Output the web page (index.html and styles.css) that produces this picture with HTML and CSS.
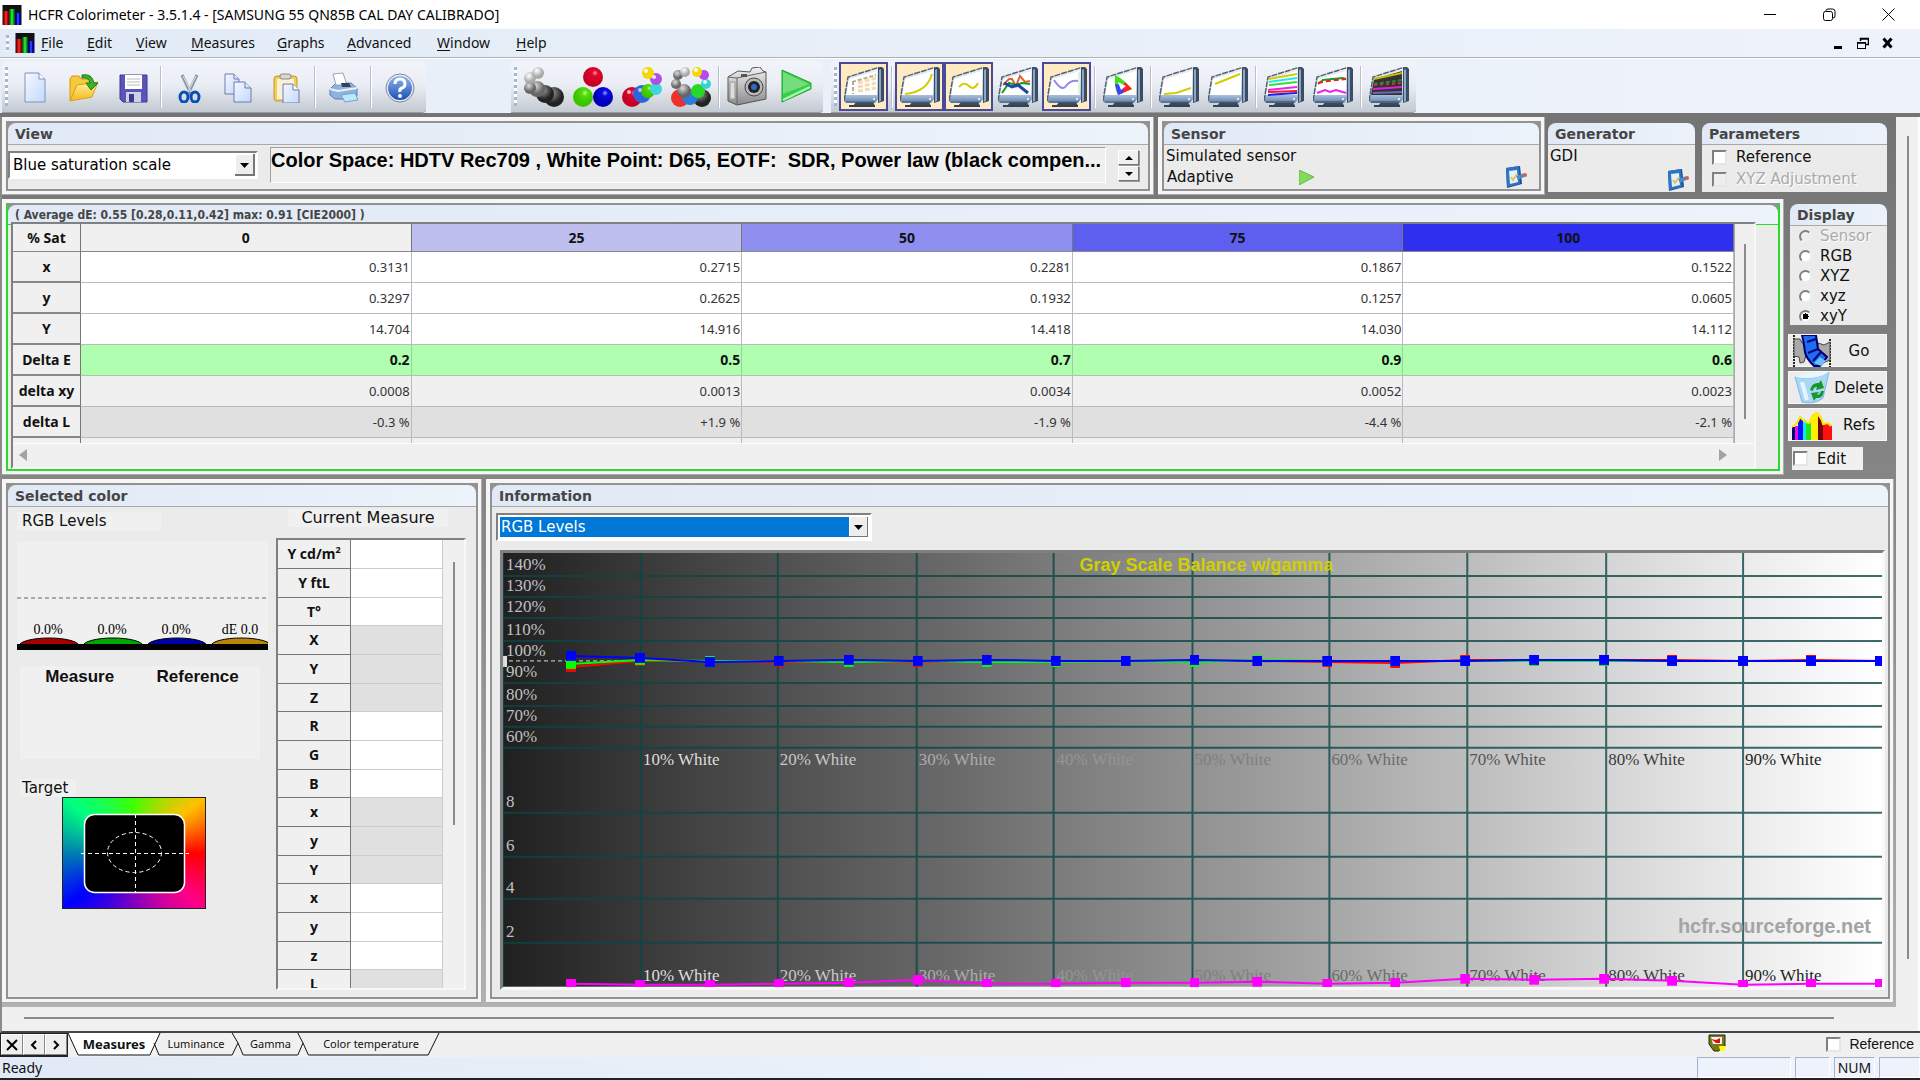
FILE: index.html
```html
<!DOCTYPE html>
<html lang="en">
<head>
<meta charset="utf-8">
<title>HCFR Colorimeter</title>
<link rel="stylesheet" href="styles.css">
</head>
<body>
<svg class="defs" aria-hidden="true">
  <defs>
    <linearGradient id="gPage" x1="0" y1="0" x2="1" y2="1"><stop offset="0" stop-color="#f4f8ff"/><stop offset="1" stop-color="#c3d9fb"/></linearGradient>
    <linearGradient id="gFolder" x1="0" y1="0" x2="0" y2="1"><stop offset="0" stop-color="#fff29a"/><stop offset="1" stop-color="#f5b81c"/></linearGradient>
    <linearGradient id="gBlue" x1="0" y1="0" x2="0" y2="1"><stop offset="0" stop-color="#8fb4ee"/><stop offset="1" stop-color="#1b4fb4"/></linearGradient>
    <linearGradient id="gFrame" x1="0" y1="0" x2="0" y2="1"><stop offset="0" stop-color="#eef2f6"/><stop offset=".6" stop-color="#c3d0e0"/><stop offset=".8" stop-color="#a3bad6"/><stop offset="1" stop-color="#5f7ea6"/></linearGradient>
    <linearGradient id="gCam" x1="0" y1="0" x2="0" y2="1"><stop offset="0" stop-color="#f2f2f2"/><stop offset="1" stop-color="#8a8a8a"/></linearGradient>
    <radialGradient id="gW" cx=".4" cy=".3"><stop offset="0" stop-color="#fff"/><stop offset="1" stop-color="#a9a9a9"/></radialGradient>
    <radialGradient id="gG" cx=".4" cy=".3"><stop offset="0" stop-color="#ddd"/><stop offset="1" stop-color="#666"/></radialGradient>
    <radialGradient id="gK" cx=".4" cy=".3"><stop offset="0" stop-color="#999"/><stop offset="1" stop-color="#222"/></radialGradient>
    <radialGradient id="gRed" cx=".6" cy=".3"><stop offset="0" stop-color="#ff9aa8"/><stop offset=".3" stop-color="#e0062c"/><stop offset="1" stop-color="#c80028"/></radialGradient>
    <radialGradient id="gGreen" cx=".6" cy=".3"><stop offset="0" stop-color="#c6ff9a"/><stop offset=".3" stop-color="#52dc0a"/><stop offset="1" stop-color="#3cc400"/></radialGradient>
    <radialGradient id="gBl" cx=".6" cy=".3"><stop offset="0" stop-color="#a0a0ff"/><stop offset=".3" stop-color="#0a0ae0"/><stop offset="1" stop-color="#0000b8"/></radialGradient>
    <symbol id="logo" viewBox="0 0 19 20">
      <rect width="19" height="20" fill="#111"/>
      <rect x="1" y="6" width="5" height="14" fill="#c00000"/><rect x="3" y="6" width="1" height="14" fill="#ff5050"/>
      <rect x="7" y="4" width="5" height="16" fill="#00a010"/><rect x="9" y="4" width="1" height="16" fill="#60ff60"/>
      <rect x="13" y="8" width="5" height="12" fill="#0000c8"/><rect x="15" y="8" width="1" height="12" fill="#5080ff"/>
    </symbol>
    <symbol id="monitor" viewBox="0 0 40 40">
      <path d="M34 0h4l2 2v32l-6 2z" fill="#3c4c62"/><path d="M35 3l2-1v32l-2 1z" fill="#8ca6c8"/>
      <path d="M4 10L34 1v31l-3 4H2L0 34z" fill="url(#gFrame)"/>
      <path d="M0 34L4 10 36 0" fill="none" stroke="#56606e" stroke-width="1.500" stroke-dasharray="6 1"/>
      <path d="M5 12L33 4V28H2z" fill="#fff"/>
      <path d="M12 35h17l2 4H9z" fill="#3a4a5e"/><path d="M5 38h26v2H5z" fill="#39424e"/>
      <path d="M2 35h28" stroke="#4c6688"/><circle cx="30" cy="32" r="1" fill="#fff"/>
    </symbol>
    <symbol id="pad" viewBox="0 0 22 22">
      <path d="M1 2l14-2 2 18-15 4z" fill="#1c4c88"/><path d="M1 2l13-2 1 18-13 3z" fill="#2f74c4"/><path d="M4 5l8-1 1 12-8 2z" fill="#e4f0fc"/>
      <path d="M6 11l2 3 4-6" stroke="#e0c860" stroke-width="2" fill="none"/>
      <path d="M12 12l7-3" stroke="#4c8ac8" stroke-width="4"/><circle cx="20" cy="9" r="2" fill="#d0604c"/>
    </symbol>
  </defs>
</svg>

<header class="titlebar">
  <svg class="logo"><use href="#logo"/></svg>
  <h1>HCFR Colorimeter - 3.5.1.4 - [SAMSUNG 55 QN85B CAL DAY CALIBRADO]</h1>
  <div class="winbtns">
    <button aria-label="Minimize"><svg width="13" height="13"><path d="M0 6.500h12" stroke="#000" fill="none"/></svg></button>
    <button aria-label="Restore"><svg width="13" height="13" fill="none" stroke="#000"><rect x=".5" y="3.500" width="9" height="9" rx="2"/><path d="M3 3V2.500Q3 1 5 1H9.500Q12 1 12 3.500V8Q12 10 10 10"/></svg></button>
    <button aria-label="Close"><svg width="13" height="13"><path d="M.5.5l12 12m0-12l-12 12" stroke="#000" fill="none"/></svg></button>
  </div>
</header>

<nav class="menubar">
  <span class="grip"></span>
  <svg class="logo"><use href="#logo"/></svg>
  <button class="m1"><u>F</u>ile</button><button class="m2"><u>E</u>dit</button><button class="m3"><u>V</u>iew</button><button class="m4"><u>M</u>easures</button><button class="m5"><u>G</u>raphs</button><button class="m6"><u>A</u>dvanced</button><button class="m7"><u>W</u>indow</button><button><u>H</u>elp</button>
  <div class="mdibtns">
    <button aria-label="Minimize document"><svg width="12" height="12"><path d="M2 9h8v3H2z"/></svg></button>
    <button aria-label="Restore document"><svg width="12" height="12" fill="none" stroke="#000"><path d="M3.500 4V1.500h8V7.500H9M3 2h9M1 6h8" stroke-width="1.500"/><rect x=".5" y="5.500" width="8" height="6"/></svg></button>
    <button aria-label="Close document"><svg width="12" height="12"><path d="M1.500 1.500l8 9m0-9l-8 9" stroke="#000" stroke-width="3"/></svg></button>
  </div>
</nav>

<div class="toolbars">
  <div class="band">
    <span class="grip"></span>
    <button aria-label="New"><svg width="32" height="32"><path d="M6 2h14l6 6v23H6z" fill="url(#gPage)" stroke="#8090c0"/><path d="M20 2v6h6" fill="#fff" stroke="#8090c0"/></svg></button>
    <button aria-label="Open"><svg width="32" height="32"><path d="M2 29V8l2-3h7l2 3h9v6" fill="#f5c93c" stroke="#d09a10"/><path d="M2 30L9 14l21-3-6 15z" fill="url(#gFolder)" stroke="#d8a018"/><path d="M14 4q10-2 12 8h4l-7 7-5-7h4q-1-6-8-5z" fill="#3bb02c" stroke="#1c7c14"/></svg></button>
    <button aria-label="Save"><svg width="32" height="32"><path d="M3 4h27v27H6l-3-3z" fill="#5a55b8" stroke="#3c3890"/><rect x="8" y="4" width="17" height="14" fill="#fff"/><path d="M10 8h13M10 11h13M10 14h13" stroke="#bbb"/><rect x="9" y="21" width="15" height="10" fill="#cfd0e8"/><rect x="12" y="23" width="5" height="8" fill="#3c3890"/></svg></button>
    <i class="sep"></i>
    <button aria-label="Cut"><svg width="32" height="32" fill="none"><path d="M9 4l9 19M24 4l-9 19" stroke="#8795a4" stroke-width="3"/><path d="M10 5l8 16M23 5l-8 16" stroke="#dfe6ec"/><ellipse cx="11" cy="26" rx="4" ry="5" stroke="#0a4cb8" stroke-width="3"/><ellipse cx="22" cy="26" rx="4" ry="5" stroke="#0a4cb8" stroke-width="3"/></svg></button>
    <button aria-label="Copy"><svg width="32" height="32" fill="url(#gPage)" stroke="#6f78b4"><path d="M3 3h9l5 5v15H3z"/><path d="M12 3v5h5"/><path d="M12 11h11l6 6v14H12z"/><path d="M23 11v6h6"/></svg></button>
    <button aria-label="Paste"><svg width="32" height="32"><rect x="3" y="5" width="23" height="25" rx="3" fill="#f3cd58" stroke="#c09a28"/><rect x="6" y="8" width="17" height="20" fill="#fbf3d8"/><rect x="9" y="3" width="11" height="5" rx="2" fill="#d8d8d0" stroke="#88887c"/><path d="M12 13h10l6 6v13H12z" fill="url(#gPage)" stroke="#6f78b4"/><path d="M22 13v6h6" fill="#fff" stroke="#6f78b4"/></svg></button>
    <i class="sep"></i>
    <button aria-label="Print"><svg width="32" height="32"><path d="M3 18l6-6h15l6 5v8l-5 3H8l-5-4z" fill="#8eb2de" stroke="#5a80b0"/><path d="M6 3l10-1 4 12H9z" fill="#fff" stroke="#98a4b8"/><path d="M3 18l8 2 19-3" stroke="#e8f2fc" stroke-width="2" fill="none"/><path d="M14 12h8l2 4h-9z" fill="#39424e"/><path d="M14 24l14-2 3 7-13 2z" fill="#bfe6fb" stroke="#6aa6d0"/></svg></button>
    <i class="sep"></i>
    <button aria-label="Help"><svg width="32" height="32"><circle cx="17" cy="17" r="14" fill="#e8ecf4" stroke="#7d879a"/><circle cx="17" cy="17" r="12" fill="url(#gBlue)"/><path d="M12 13q0-5 5-5t5 5q0 3-3 4t-2 4" fill="none" stroke="#fff" stroke-width="3"/><circle cx="17" cy="25" r="2" fill="#fff"/></svg></button>
  </div>
  <div class="band band-measures">
    <span class="grip"></span>
    <button aria-label="Measure grays"><svg width="40" height="40"><circle cx="30" cy="30" r="10" fill="url(#gK)"/><circle cx="21" cy="27" r="9" fill="url(#gK)"/><circle cx="13" cy="22" r="8" fill="url(#gG)"/><circle cx="6" cy="21" r="6" fill="url(#gG)"/><circle cx="6" cy="11" r="6" fill="url(#gW)"/><circle cx="14" cy="6" r="6" fill="url(#gW)"/></svg></button>
    <button aria-label="Measure primaries"><svg width="40" height="40"><circle cx="20" cy="10" r="10" fill="url(#gRed)"/><circle cx="10" cy="30" r="10" fill="url(#gGreen)"/><circle cx="30" cy="30" r="10" fill="url(#gBl)"/></svg></button>
    <button aria-label="Measure secondaries"><svg width="40" height="40"><circle cx="10" cy="30" r="10" fill="url(#gRed)"/><circle cx="20" cy="27" r="9" fill="#2d66d8"/><circle cx="26" cy="24" r="7" fill="url(#gGreen)"/><circle cx="34" cy="22" r="6" fill="#3cd8dc"/><circle cx="34" cy="12" r="6" fill="#b050e0"/><circle cx="26" cy="6" r="6" fill="#f4d800"/><circle cx="24" cy="4" r="2" fill="#fff"/><circle cx="32" cy="10" r="2" fill="#f4e0ff"/><circle cx="7" cy="25" r="2" fill="#fbb"/><circle cx="18" cy="23" r="2" fill="#a8c8ff"/></svg></button>
    <button aria-label="Measure all"><svg width="40" height="40"><circle cx="9" cy="31" r="9" fill="#f03028"/><circle cx="31" cy="31" r="9" fill="url(#gK)"/><circle cx="19" cy="30" r="8" fill="#2d7ad8"/><circle cx="13" cy="24" r="7" fill="url(#gG)"/><circle cx="27" cy="24" r="7" fill="#28d828"/><circle cx="5" cy="17" r="5" fill="url(#gG)"/><circle cx="35" cy="17" r="5" fill="#38d0d0"/><circle cx="7" cy="8" r="5" fill="url(#gG)"/><circle cx="33" cy="8" r="5" fill="#b848e8"/><circle cx="14" cy="5" r="5" fill="url(#gW)"/><circle cx="26" cy="5" r="5" fill="#f4d800"/><circle cx="25" cy="3" r="2" fill="#fff"/><circle cx="34" cy="15" r="2" fill="#dff"/></svg></button>
    <i class="sep"></i>
    <button aria-label="Capture"><svg width="40" height="40"><path d="M1 10L11 4l12 1 2-4 8-1 3 4 3 1v27L10 38 1 34z" fill="url(#gCam)" stroke="#555"/><path d="M1 10l9 1v27M10 11l29-6" stroke="#666" fill="none"/><path d="M3 15h5v17H3z" fill="#ddd" stroke="#999"/><circle cx="27" cy="20" r="9" fill="#b8b8b8" stroke="#444"/><circle cx="27" cy="20" r="6" fill="#222"/><circle cx="27" cy="20" r="3" fill="#2a6cc8"/><rect x="14" y="7" width="6" height="3" fill="#555"/></svg></button>
    <button aria-label="Run"><svg width="40" height="40"><path d="M6 3L35 16v6L6 35z" fill="#35d048" stroke="#1ca430"/><path d="M7 5L33 17 7 27z" fill="#74dd7c"/><path d="M7 33L34 20" stroke="#b4f4b8" stroke-width="2"/></svg></button>
  </div>
  <div class="band band-views">
    <span class="grip"></span>
    <button class="on" aria-label="Data sheet"><svg width="40" height="40"><use href="#monitor"/><path d="M14 16l18-5M14 20l18-4M14 24l18-3" stroke="#f4dcb0" stroke-width="3" stroke-dasharray="5 2"/><path d="M8 15l24-7M9 14v13" fill="none" stroke="#b8ac8c" stroke-width="2" stroke-dasharray="4 2"/></svg></button>
    <i class="sep"></i>
    <button class="on" aria-label="Luminance"><svg width="40" height="40" fill="none"><use href="#monitor"/><path d="M5 27q22-2 27-20" stroke="#d4cc00" stroke-width="2"/></svg></button>
    <button class="on" aria-label="Gamma"><svg width="40" height="40" fill="none"><use href="#monitor"/><path d="M10 20q5-6 10-1t9-3" stroke="#d4cc00" stroke-width="2"/></svg></button>
    <button aria-label="RGB levels"><svg width="40" height="40" fill="none"><use href="#monitor"/><path d="M5 18l6-6 3 0 4 7 4-10 5 6 5-1" stroke="#e06038" stroke-width="2"/><path d="M4 26l7-10 7 2 6-2 8 1" stroke="#18981c" stroke-width="2"/><path d="M6 16l8 4 6-2 10 8" stroke="#1848a8" stroke-width="3"/></svg></button>
    <button class="on" aria-label="Color temperature"><svg width="40" height="40" fill="none"><use href="#monitor"/><path d="M7 13q8 12 12 6t12-5" stroke="#9488e8" stroke-width="2"/><path d="M32 5v22" stroke="#b8e8b8"/></svg></button>
    <i class="sep"></i>
    <button aria-label="CIE diagram"><svg width="40" height="40"><use href="#monitor"/><path d="M12 8q6 2 17 14l-14 6q-4-6-3-20z" fill="#40e020"/><path d="M22 15l7 7-14 6z" fill="#ff2020"/><path d="M12 17l3 11 5-2 1-8z" fill="#4040ff"/><path d="M15 15l8 4-5 4z" fill="#fff"/></svg></button>
    <i class="sep"></i>
    <button aria-label="Near black"><svg width="40" height="40" fill="none"><use href="#monitor"/><path d="M5 27l12-1 15-5" stroke="#d4cc00" stroke-width="2"/></svg></button>
    <button aria-label="Near white"><svg width="40" height="40" fill="none"><use href="#monitor"/><path d="M7 17l25-10" stroke="#d4cc00" stroke-width="2"/></svg></button>
    <i class="sep"></i>
    <button aria-label="Saturation"><svg width="40" height="40" fill="none" stroke-width="2"><use href="#monitor"/><path d="M5 12l28-5" stroke="#d4cc00"/><path d="M5 15l28-4" stroke="#20e8e8"/><path d="M5 18l28-3" stroke="#30e030"/><path d="M4 23l29-3" stroke="#f020f0"/><path d="M4 25l29-1" stroke="#f02020"/><path d="M4 28l29-2" stroke="#2020f0"/></svg></button>
    <button aria-label="Color shifts"><svg width="40" height="40" fill="none" stroke-width="2"><use href="#monitor"/><path d="M5 17l5-4 20-2 3 1" stroke="#10a020"/><path d="M5 16l10-2 18-2" stroke="#f02020" stroke-dasharray="5 3"/><path d="M4 26l8-3 5 2 6-2 10 3" stroke="#f020f0"/></svg></button>
    <i class="sep"></i>
    <button aria-label="Combined"><svg width="40" height="40" fill="none" stroke-width="2"><use href="#monitor"/><path d="M5 12L33 4V28H2z" fill="#333"/><path d="M5 12l28-6" stroke="#c4bc00"/><path d="M5 17l28-4" stroke="#28883c" stroke-dasharray="4 2"/><path d="M5 18l28-2" stroke="#c04030" stroke-dasharray="3 3"/><path d="M4 22l29-2" stroke="#e020e0"/><path d="M4 26l29-1" stroke="#6868c0"/></svg></button>
  </div>
</div>

<main class="mdi">
  <div class="canvas">
    <div class="row row-top">
      <section class="frame grow"><div class="panel">
        <h2>View</h2>
        <div class="view-body">
          <select class="combo" aria-label="View"><option>Blue saturation scale</option></select>
          <p class="info-text">Color Space: HDTV Rec709 , White Point: D65, EOTF: &nbsp;SDR, Power law (black compen...</p>
          <div class="spin"><button aria-label="Up"><svg width="8" height="4"><path d="M0 4h8L4 0z"/></svg></button><button aria-label="Down"><svg width="8" height="4"><path d="M0 0h8L4 4z"/></svg></button></div>
        </div>
      </div></section>
      <section class="frame sensor"><div class="panel">
        <h2>Sensor</h2>
        <div class="sensor-body"><div><p>Simulated sensor</p><p class="adaptive">Adaptive <svg width="15" height="15"><path d="M0 0l15 7-15 8z" fill="#82dc5a" stroke="#64b848"/></svg></p></div>
        <button class="padbtn" aria-label="Configure sensor"><svg width="22" height="22"><use href="#pad"/></svg></button></div>
      </div></section>
      <section class="panel bare generator">
        <h2>Generator</h2>
        <div class="sensor-body"><p>GDI</p><button class="padbtn" aria-label="Configure generator"><svg width="22" height="22"><use href="#pad"/></svg></button></div>
      </section>
      <section class="panel bare parameters">
        <h2>Parameters</h2>
        <label class="check"><input type="checkbox"><span>Reference</span></label>
        <label class="check off"><input type="checkbox" disabled><span>XYZ Adjustment</span></label>
      </section>
    </div>

    <div class="row row-mid">
      <section class="frame grow"><div class="panel data-panel">
        <h2>( Average dE: 0.55 [0.28,0.11,0.42] max: 0.91 [CIE2000] )</h2>
        <div class="grid-box">
          <div class="grid-view">
            <table class="data">
              <thead><tr><th scope="col">% Sat</th><th scope="col">0</th><th scope="col" class="s25">25</th><th scope="col" class="s50">50</th><th scope="col" class="s75">75</th><th scope="col" class="s100">100</th></tr></thead>
              <tbody>
                <tr><th scope="row">x</th><td>0.3131</td><td>0.2715</td><td>0.2281</td><td>0.1867</td><td>0.1522</td></tr>
                <tr><th scope="row">y</th><td>0.3297</td><td>0.2625</td><td>0.1932</td><td>0.1257</td><td>0.0605</td></tr>
                <tr><th scope="row">Y</th><td>14.704</td><td>14.916</td><td>14.418</td><td>14.030</td><td>14.112</td></tr>
                <tr class="de"><th scope="row">Delta E</th><td>0.2</td><td>0.5</td><td>0.7</td><td>0.9</td><td>0.6</td></tr>
                <tr class="dxy"><th scope="row">delta xy</th><td>0.0008</td><td>0.0013</td><td>0.0034</td><td>0.0052</td><td>0.0023</td></tr>
                <tr class="dl"><th scope="row">delta L</th><td>-0.3 %</td><td>+1.9 %</td><td>-1.9 %</td><td>-4.4 %</td><td>-2.1 %</td></tr>
                <tr class="dxy"><th></th><td></td><td></td><td></td><td></td><td></td></tr>
              </tbody>
            </table>
            <div class="vbar"><i></i></div>
          </div>
          <div class="hbar"><svg width="8" height="12"><path d="M8 0v12L0 6z" fill="#a3a3a3"/></svg><svg width="8" height="12"><path d="M0 0v12l8-6z" fill="#a3a3a3"/></svg></div>
        </div>
      </div></section>
      <aside class="side">
        <section class="panel bare display">
          <h2>Display</h2>
          <label class="off"><input type="radio" name="display" disabled><span>Sensor</span></label>
          <label><input type="radio" name="display"><span>RGB</span></label>
          <label><input type="radio" name="display"><span>XYZ</span></label>
          <label><input type="radio" name="display"><span>xyz</span></label>
          <label><input type="radio" name="display" checked><span>xyY</span></label>
        </section>
        <button class="act"><svg width="40" height="32"><path d="M2 0v32M38 4v28" stroke="#222" stroke-width="2" stroke-dasharray="2 1"/><path d="M2 4h6l2 4 6-2 3 10-5 4-2 7-4 1-1-6-5-1zM26 8l6 2 6-3v18l-7 3-6-7z" fill="#aaa" stroke="#444"/><path d="M12 0h12l2 14 9 8-7 9h-6q-8-8-9-14-1-9-3-17z" fill="#1f6cf0" stroke="#00006c" stroke-width="2"/><path d="M15 7l9-3M16 18l10-4M21 26l8-9" stroke="#04047c" stroke-width="2"/><path d="M22 28l6-6 6 4-5 5z" fill="#6abfff"/></svg><span>Go</span></button>
        <button class="act"><svg width="40" height="32"><path d="M3 5q18 4 34-5l-6 26q-9 7-21 4z" fill="#aad8f4" stroke="#7cb8e0"/><path d="M3 5q14-6 34-5-14 9-34 5z" fill="#e8f7ff"/><path d="M10 10l5 18" stroke="#e4f5ff" stroke-width="4"/><path d="M18 18q2-8 9-7l2-3 3 8-8 2 1-3q-4 0-4 4zM32 19q-1 8-8 7l-2 3-3-8 8-1-2 3q3 0 4-4z" fill="#15982c"/></svg><span>Delete</span></button>
        <button class="act"><svg width="40" height="32"><path d="M0 18h5v13H0z" fill="#000070"/><path d="M3 17h3v14H3z" fill="#e010e0"/><path d="M6 12l3-4 2 4v19H6z" fill="#1010ff"/><path d="M11 10l4 2v19h-4z" fill="#10e8e8"/><path d="M14 15l4-2 2 3v15h-6z" fill="#20e020"/><path d="M19 12l3-6 4 0v25h-7z" fill="#ffee00"/><path d="M26 7l5 7v17h-5z" fill="#700010"/><path d="M31 15l5-1 4 3v14h-9z" fill="#ff1010"/><path d="M0 18l5-4 3-6 4 4 5 2 4-8 4-2 4 4 2 7 5-1 3 3" fill="none" stroke="#ffe800" stroke-width="2"/></svg><span>Refs</span></button>
        <label class="check edit"><input type="checkbox"><span>Edit</span></label>
      </aside>
    </div>

    <div class="row row-bottom">
      <section class="frame selected"><div class="panel">
        <h2>Selected color</h2>
        <div class="sel-body">
          <div class="sel-left">
            <p class="chip rgb-title">RGB Levels</p>
            <svg class="levels" viewBox="0 0 251 108" width="251" height="108">
              <rect width="251" height="108" fill="#f0f0f0"/>
              <path d="M0 56h251" stroke="#aaa" stroke-width="2" stroke-dasharray="4 3"/>
              <g stroke="#000"><ellipse cx="32" cy="104" rx="30" ry="8" fill="#a80000"/><ellipse cx="96" cy="104" rx="30" ry="8" fill="#00a800"/><ellipse cx="160" cy="104" rx="30" ry="8" fill="#0000a8"/><ellipse cx="224" cy="104" rx="30" ry="8" fill="#b8860b"/></g>
              <rect y="102" width="251" height="6"/>
              <g class="lv"><text x="31" y="92">0.0%</text><text x="95" y="92">0.0%</text><text x="159" y="92">0.0%</text><text x="223" y="92">dE 0.0</text></g>
            </svg>
            <div class="mr"><b>Measure</b><b>Reference</b></div>
            <p class="chip target-title">Target</p>
            <div class="target"><svg width="142" height="110" fill="none"><rect x="21.500" y="16.500" width="100" height="78" rx="10" fill="#000" stroke="#fff" stroke-width="1.500"/><g stroke="#fff" stroke-dasharray="4 3"><path d="M18 55.500h108M72.500 16v79"/><ellipse cx="71.500" cy="54.500" rx="27" ry="20"/></g></svg></div>
          </div>
          <div class="sel-right">
            <p class="chip cm-title">Current Measure</p>
            <div class="meas-box">
              <table class="meas">
                <tbody>
                <tr><th scope="row">Y cd/m<sup>2</sup></th><td></td></tr><tr><th scope="row">Y ftL</th><td></td></tr><tr><th scope="row">T°</th><td></td></tr>
                <tr class="g"><th scope="row">X</th><td></td></tr><tr class="g"><th scope="row">Y</th><td></td></tr><tr class="g"><th scope="row">Z</th><td></td></tr>
                <tr><th scope="row">R</th><td></td></tr><tr><th scope="row">G</th><td></td></tr><tr><th scope="row">B</th><td></td></tr>
                <tr class="g"><th scope="row">x</th><td></td></tr><tr class="g"><th scope="row">y</th><td></td></tr><tr class="g"><th scope="row">Y</th><td></td></tr>
                <tr><th scope="row">x</th><td></td></tr><tr><th scope="row">y</th><td></td></tr><tr><th scope="row">z</th><td></td></tr>
                <tr class="g"><th scope="row">L</th><td></td></tr>
                </tbody>
              </table>
              <div class="vbar"><i></i></div>
            </div>
          </div>
        </div>
      </div></section>
      <section class="frame grow"><div class="panel">
        <h2>Information</h2>
        <div class="info-body">
          <select class="combo focus" aria-label="Information"><option>RGB Levels</option></select>
          <div class="chart-box">
            <svg class="chart" viewBox="0 0 1380 434">
              <defs>
                <linearGradient id="ramp"><stop offset="0" stop-color="#202020"/><stop offset=".1" stop-color="#393939"/><stop offset=".2" stop-color="#505050"/><stop offset=".3" stop-color="#646464"/><stop offset=".4" stop-color="#7b7b7b"/><stop offset=".7" stop-color="#bdbdbd"/><stop offset=".8" stop-color="#d5d5d5"/><stop offset=".9" stop-color="#ebebeb"/><stop offset="1" stop-color="#fff"/></linearGradient>
                <marker id="mr" markerUnits="userSpaceOnUse" markerWidth="10" markerHeight="10" refX="5" refY="5"><rect width="10" height="10" fill="#f00"/></marker>
                <marker id="mg" markerUnits="userSpaceOnUse" markerWidth="10" markerHeight="10" refX="5" refY="5"><rect width="10" height="10" fill="#0f0"/></marker>
                <marker id="mb" markerUnits="userSpaceOnUse" markerWidth="10" markerHeight="10" refX="5" refY="5"><rect width="10" height="10" fill="#00f"/></marker>
                <marker id="mm" markerUnits="userSpaceOnUse" markerWidth="10" markerHeight="10" refX="5" refY="5"><rect width="10" height="10" fill="#f0f"/></marker>
              </defs>
              <rect width="1380" height="434" fill="url(#ramp)"/>
              <path class="gridline" d="M0 23H1380M0 44H1380M0 65H1380M0 88H1380M0 130H1380M0 153H1380M0 174H1380M0 195H1380M0 260H1380M0 304H1380M0 346H1380M0 390H1380M0 0V434M138 0V434M275 0V434M414 0V434M551 0V434M690 0V434M827 0V434M965 0V434M1104 0V434M1241 0V434"/>
              <g class="ylab"><text x="3" y="17">140%</text><text x="3" y="38">130%</text><text x="3" y="59">120%</text><text x="3" y="82">110%</text><text x="3" y="103">100%</text><text x="3" y="124">90%</text><text x="3" y="147">80%</text><text x="3" y="168">70%</text><text x="3" y="189">60%</text><text x="3" y="254">8</text><text x="3" y="298">6</text><text x="3" y="340">4</text><text x="3" y="384">2</text></g>
              <g class="xlab">
                <g fill="#dedede"><text x="140" y="212">10% White</text><text x="140" y="428">10% White</text></g>
                <g fill="#c8c8c8"><text x="277" y="212">20% White</text><text x="277" y="428">20% White</text></g>
                <g fill="#adadad"><text x="416" y="212">30% White</text><text x="416" y="428">30% White</text></g>
                <g fill="#959595"><text x="554" y="212">40% White</text><text x="554" y="428">40% White</text></g>
                <g fill="#808080"><text x="692" y="212">50% White</text><text x="692" y="428">50% White</text></g>
                <g fill="#6c6c6c"><text x="829" y="212">60% White</text><text x="829" y="428">60% White</text></g>
                <g fill="#555"><text x="967" y="212">70% White</text><text x="967" y="428">70% White</text></g>
                <g fill="#3a3a3a"><text x="1106" y="212">80% White</text><text x="1106" y="428">80% White</text></g>
                <g fill="#222"><text x="1243" y="212">90% White</text><text x="1243" y="428">90% White</text></g>
              </g>
              <text class="ctitle" x="577" y="18">Gray Scale Balance w/gamma</text>
              <text class="credit" x="1369" y="380">hcfr.sourceforge.net</text>
              <path d="M6 108H138" stroke="#ddd" stroke-dasharray="4 3"/><rect y="103" width="4" height="11" fill="#e0e0e0"/>
              <polyline class="series" stroke="#f00" marker-start="url(#mr)" marker-mid="url(#mr)" marker-end="url(#mr)" points="68,114 137,108 207,108 276,109 346,108 415,109 484,108 553,108 623,108 692,108 755,108 825,109 893,110 963,107 1032,107 1102,107 1170,107 1241,108 1309,107 1378,108"/>
              <polyline class="series" stroke="#0f0" marker-start="url(#mg)" marker-mid="url(#mg)" marker-end="url(#mg)" points="68,111 137,107 207,108 276,108 346,109 415,108 484,109 553,109 623,108 692,109 755,107 825,108 893,108 963,108 1032,108 1102,108 1170,108 1241,108 1309,108 1378,108"/>
              <polyline class="series" stroke="#00f" marker-start="url(#mb)" marker-mid="url(#mb)" marker-end="url(#mb)" points="68,103 137,105 207,109 276,108 346,107 415,108 484,107 553,108 623,108 692,107 755,108 825,108 893,108 963,108 1032,107 1102,107 1170,108 1241,108 1309,108 1378,108"/>
              <polyline class="series" stroke="#f0f" marker-start="url(#mm)" marker-mid="url(#mm)" marker-end="url(#mm)" points="68,431 137,432 207,432 276,431 346,430 415,427 484,431 553,431 623,430 692,430 755,429 825,431 893,430 963,426 1032,427 1102,426 1170,428 1241,432 1309,431 1378,431"/>
            </svg>
          </div>
        </div>
      </div></section>
    </div>
    <div class="hscroll"><i></i></div>
  </div>
  <div class="vscroll"><i></i></div>
</main>

<nav class="tabs">
  <div class="tabbtns"><button aria-label="Close view"><svg width="12" height="12"><path d="M1 1l10 10M11 1L1 11" stroke="#000" stroke-width="2"/></svg></button><button aria-label="Previous"><svg width="8" height="10"><path d="M6 1L2 5l4 4" stroke="#000" stroke-width="2" fill="none"/></svg></button><button aria-label="Next"><svg width="8" height="10"><path d="M2 1l4 4-4 4" stroke="#000" stroke-width="2" fill="none"/></svg></button></div>
  <div class="tabset">
    <button class="tab t1"><svg viewBox="0 0 100 22" preserveAspectRatio="none"><path d="M0 0L11 22H89L100 0z" fill="#fff"/><path d="M0 0L11 22H89L100 0" /></svg><span>Measures</span></button><button class="tab t2"><svg viewBox="0 0 100 22" preserveAspectRatio="none"><path d="M0 10L6 22H93L100 10L93 0"/></svg><span>Luminance</span></button><button class="tab t3"><svg viewBox="0 0 100 22" preserveAspectRatio="none"><path d="M0 10L8 22H92L100 10L92 0"/></svg><span>Gamma</span></button><button class="tab t4"><svg viewBox="0 0 100 22" preserveAspectRatio="none"><path d="M0 10L4 22H92L100 0"/></svg><span>Color temperature</span></button>
  </div>
  <svg class="badge" width="20" height="18"><path d="M1 1h16v11l-4 1-2 4H6l-3-4-2-3z" fill="#7a7a10" stroke="#222"/><path d="M3 3h11v7H5z" fill="#f4f4f4"/><path d="M3 5l5 1 4-2v5H8z" fill="#e01010"/><path d="M11 12h7l-2 5h-4z" fill="#ff0"/></svg>
  <label class="check tabref"><input type="checkbox"><span>Reference</span></label>
</nav>
<footer class="status"><span class="ready">Ready</span><i class="p1"></i><i class="p2"></i><i class="p3">NUM</i><i class="p4"></i></footer>
</body>
</html>
```
FILE: styles.css
```css
* { box-sizing: border-box; }
body {
  margin: 0; min-height: 100vh; display: flex; flex-direction: column;
  background: #f0f0f0; color: #111;
  font: 15px/20px "DejaVu Sans", sans-serif;
  border-bottom: 2px solid #222;
}
h1, h2, p { margin: 0; font-weight: normal; }
button { font: inherit; color: inherit; background: none; border: 0; padding: 0; margin: 0; }
button svg, .logo { display: block; }
i { font-style: normal; }
.defs { position: absolute; width: 0; height: 0; }

.titlebar { display: flex; align-items: center; height: 29px; padding: 0 25px 0 2px; background: #fff; }
.titlebar .logo { width: 20px; height: 20px; margin-right: 6px; }
.titlebar h1 { font: 14px/20px "Noto Sans", sans-serif; color: #000; }
.winbtns { margin-left: auto; display: flex; gap: 46px; }
.mdibtns { margin-left: auto; display: flex; gap: 13px; }

.menubar { display: flex; align-items: center; height: 29px; padding: 0 26px 0 6px; background: linear-gradient(90deg, #e2ebf6, #eef3fb); font: 14px/20px "Noto Sans", sans-serif; border-bottom: 1px solid #b0b0b0; }
.menubar .logo { width: 20px; height: 20px; margin: 0 6px; }
.menubar u { text-underline-offset: 2px; }
.grip { width: 3px; align-self: stretch; margin: 6px 0; background: repeating-linear-gradient(#a5b6cf 0 3px, #fff 3px 6px); }
.m1 { width: 46px; } .m2 { width: 49px; } .m3 { width: 55px; } .m4 { width: 86px; }
.m5 { width: 70px; } .m6 { width: 90px; } .m7 { width: 79px; }
.menubar > button { text-align: left; }

.toolbars { display: flex; height: 59px; padding: 2px 2px 0; background: linear-gradient(90deg, #e6eef8, #eef3fb); border-bottom: 4px solid #747474; border-top: 1px solid #fff; }
.band { display: flex; align-items: center; height: 52px; padding: 0 3px; border-radius: 4px 4px 4px 0; background: linear-gradient(#f1f5fb 0, #ebeff5 45%, #c4cad2 100%); border-bottom: 1px solid #989ca2; }
.band .grip { margin: 6px 2px 6px 0; }
.band-measures { margin-left: 85px; }
.band-views { margin-left: 8px; }
.band button { width: 49px; height: 49px; flex: none; display: grid; place-items: center; }
.band .on { background: #ffebc2; border: 2px solid #4a4a9c; }
.sep { width: 7px; height: 42px; background: linear-gradient(90deg, transparent 3px, #b9c0cb 3px 4px, #fff 4px 5px, transparent 5px); }

.mdi { flex: 1; display: flex; border-left: 2px solid #8b8b8b; border-bottom: 2px solid #444; }
.canvas { flex: 1; min-width: 0; display: flex; flex-direction: column; background: linear-gradient(#747474, #8a8a8a 50%, #b4b4b4); }
.row { display: flex; margin-bottom: 4px; padding-right: 9px; }
.row-bottom { flex: 1; padding-right: 2px; gap: 4px; }
.grow { flex: 1; min-width: 0; }
.frame { display: flex; padding: 4px; background: #f6f6f6; box-shadow: inset -1px -1px #aaa; }
.panel { display: flex; flex-direction: column; background: linear-gradient(transparent 20px, #ebebeb 20px); }
.frame > .panel { flex: 1; min-width: 0; border: 2px solid #929292; background: linear-gradient(#929292 16px, #ebebeb 16px); }
.panel h2 { height: 22px; padding-left: 7px; border-radius: 8px 8px 0 0; border-bottom: 1px solid #a8a8a8; background: linear-gradient(90deg, #e0e9f5, #edf3fb); font: bold 14px/23px "DejaVu Sans", sans-serif; color: #454545; white-space: nowrap; }

.row-top { height: 78px; }
.view-body { display: flex; align-items: flex-start; padding: 2px 9px 0 0; }
.combo {
  appearance: none; width: 250px; height: 28px; margin: 4px 0 0; padding: 0 24px 0 3px; border: 2px solid; border-color: #808080 #fff #fff #808080; border-radius: 0;
  font: 15px/22px "DejaVu Sans", sans-serif; color: #000; outline: 0;
  background: #fff url("data:image/svg+xml,%3Csvg xmlns='http://www.w3.org/2000/svg' width='20' height='22'%3E%3Crect width='20' height='22' fill='%23777'/%3E%3Crect width='18' height='20' fill='%23fff'/%3E%3Crect x='1' y='1' width='17' height='19' fill='%23eee'/%3E%3Cpath d='M5 9h9l-4.500 5z'/%3E%3C/svg%3E") no-repeat right 1px center;
}
.info-text { flex: 1; min-width: 0; height: 36px; margin: 0 12px 0 12px; padding: 0; overflow: hidden; white-space: nowrap; font: bold 20px/24px "Liberation Sans", sans-serif; color: #000; background: #f0f0f0; border: 1px solid; border-color: #a0a0a0 #fff #fff #a0a0a0; }
.spin { display: flex; flex-direction: column; gap: 1px; margin-top: 3px; }
.spin button { width: 21px; height: 15px; display: grid; place-items: center; background: #f0f0f0; border: 1px solid; border-color: #fff #777 #777 #fff; box-shadow: 1px 1px #999; }

.sensor { width: 387px; margin-left: 4px; }
.generator { width: 147px; margin: 6px 7px 3px 3px; }
.parameters { width: 185px; margin: 6px 0 3px; }
.sensor-body { display: flex; justify-content: space-between; flex: 1; line-height: 21px; padding: 1px 0 0 2px; }
.adaptive { display: flex; align-items: center; gap: 66px; padding-left: 1px; }
.padbtn { align-self: flex-end; margin: 0 6px 1px 0; }
.sensor .padbtn { margin: 0 12px 1px 0; }
.check { display: flex; align-items: center; gap: 9px; height: 22px; padding-left: 10px; }
.parameters .check:nth-of-type(1) { margin-top: 1px; }
.check input { appearance: none; flex: none; width: 15px; height: 15px; margin: 0; background: #fff; border: 2px solid; border-color: #808080 #e6e6e6 #e6e6e6 #808080; }
.off { color: #aaa; text-shadow: 1px 1px #fff; }
.check.off input { background: #eee; }

.row-mid { height: 276px; }
.frame > .data-panel { border-color: #929292 #28dc28 #28dc28; }
.data-panel h2 { height: 20px; font: bold 12px/20px "DejaVu Sans Condensed", "DejaVu Sans", sans-serif; border-bottom: 1px solid #28dc28; }
.grid-box { margin: -3px 22px 0 3px; height: 247px; border: 2px solid; border-color: #808080 #f8f8f8 #f8f8f8 #808080; background: #f0f0f0; position: relative; }
.grid-view { height: 219px; display: flex; overflow: hidden; }
.data { flex: 1; align-self: flex-start; border-collapse: separate; border-spacing: 0; table-layout: fixed; font: 13px/20px "Noto Sans", sans-serif; border-right: 1px solid #aaa; }
.data th { font: bold 14px/20px "Noto Sans", sans-serif; padding: 0; background: #f0f0f0; border-right: 1px solid #777; border-bottom: 2px solid #888; height: 31px; }
.data thead th { height: 28px; border-bottom-width: 1px; }
.data thead th:first-child { width: 68px; }
.data td { padding: 0 1px 0 0; text-align: right; background: #fff; border-right: 1px solid #bbb; border-bottom: 1px solid #bbb; color: #333; }
.data .s25 { background: #bfbfef; } .data .s50 { background: #8f8fef; } .data .s75 { background: #5f5fef; } .data .s100 { background: #2f2fef; }
.data .de td { background: #b0ffb0; font-weight: bold; font-size: 14px; color: #111; border-color: #a8c8a8; }
.data .dxy td { background: #f0f0f0; } .data .dl td { background: #e0e0e0; }
.vbar { width: 21px; display: flex; justify-content: center; padding: 20px 0 24px; background: #f0f0f0; }
.grid-view .vbar { width: 19px; }
.vbar i { width: 2px; background: #8b8b8b; }
.hbar { display: flex; justify-content: space-between; align-items: center; height: 22px; padding: 0 27px 0 6px; border-top: 1px solid #fff; }

.side { width: 99px; margin-left: 4px; display: flex; flex-direction: column; }
.display { margin: 5px 0 9px 2px; height: 121px; }
.display label { display: flex; align-items: center; gap: 8px; height: 20px; padding-left: 9px; }
.display input { appearance: none; width: 13px; height: 13px; margin: 0; border-radius: 50%; background: #fff; border: 2px solid; border-color: #808080 #eee #eee #808080; }
.display input:checked { background: radial-gradient(#000 3px, #fff 3px); }
.display input:disabled { background: #eee; }
.act { display: flex; align-items: center; height: 33px; margin-bottom: 4px; padding-left: 3px; background: #ececec; border: 1px solid #f8f8f8; }
.act span { flex: 1; text-align: center; }
.act svg { flex: none; }
.edit { width: 71px; height: 23px; margin: 2px 0 0 4px; padding-left: 1px; background: #f0f0f0; }

.selected { width: 480px; }
.sel-body { flex: 1; display: flex; }
.chip { background: #f0f0f0; line-height: 18px; }
.sel-left { width: 268px; padding-left: 9px; }
.rgb-title { width: 144px; margin: 5px 0 12px; padding-left: 5px; }
.levels { display: block; }
.lv { font: 14px "Liberation Serif", serif; text-anchor: middle; }
.mr { width: 240px; height: 93px; margin: 16px 0 20px 3px; padding-left: 4px; background: #f0f0f0; display: flex; justify-content: space-around; font: 17px/22px "Liberation Sans", sans-serif; }
.target-title { width: 56px; margin-left: 3px; padding-left: 2px; line-height: 18px; }
.target { width: 144px; height: 112px; margin-left: 45px; border: 1px solid #222; background: conic-gradient(#40ff00, #ffc000 52deg, #f00 90deg, #ff0088 128deg, #8000c0 180deg, #00f 232deg, #0080b0 270deg, #00ff80 308deg, #40ff00 360deg); }
.target svg { display: block; }
.sel-right { flex: 1; }
.cm-title { width: 160px; margin: 2px 0 11px 12px; text-align: center; font-size: 16px; }
.meas-box { width: 190px; height: 452px; display: flex; overflow: hidden; border: 2px solid; border-color: #808080 #f8f8f8 #f8f8f8 #808080; }
.meas { width: 166px; align-self: flex-start; border-collapse: separate; border-spacing: 0; table-layout: fixed; }
.meas th { height: 29px; width: 73px; padding: 0; background: #f0f0f0; border-right: 1px solid #777; border-bottom: 1px solid #777; font: bold 14px/20px "Noto Sans", sans-serif; }
.meas tr:nth-child(3n) th { height: 28px; }
.meas sup { font-size: 9px; line-height: 0; }
.meas td { padding: 0; background: #fff; border-right: 1px solid #ccc; border-bottom: 1px solid #ccc; }
.meas .g td { background: #e0e0e0; }
.meas-box .vbar { padding: 22px 0 163px; }

.info-body { padding: 0 3px 0 4px; }
.combo.focus { display: block; width: 376px; margin-top: 6px; box-shadow: inset 0 0 0 2px #fff; color: #fff; background-color: #0078d7; }
.chart-box { margin: 9px 0 0 4px; border: 3px solid; border-color: #808080 #f8f8f8 #f8f8f8 #808080; }
.chart { display: block; width: 100%; height: auto; }
.gridline { stroke: #0c4646; stroke-width: 2; stroke-opacity: .8; fill: none; }
.ylab, .xlab { font: 17px "Liberation Serif", serif; }
.ylab { fill: #c0c0c0; }
.ctitle { font: bold 18px "Liberation Sans", sans-serif; fill: #d0d000; }
.credit { font: bold 20px "Liberation Sans", sans-serif; fill: #a4a4a4; text-anchor: end; }
.series { fill: none; stroke-width: 2; }

.hscroll { height: 24px; background: #f0f0f0; padding: 10px 62px 0 22px; }
.hscroll i { display: block; height: 2px; background: #8b8b8b; }
.vscroll { width: 24px; background: #f0f0f0; border-right: 2px solid #fff; padding: 19px 0 72px 11px; display: flex; }
.vscroll i { width: 2px; background: #8b8b8b; }

.tabs { display: flex; height: 24px; background: #f0f0f0; font: 11px/22px "Noto Sans", sans-serif; }
.tabbtns { display: flex; background: #222; padding: 1px; }
.tabbtns button { width: 22px; height: 21px; display: grid; place-items: center; background: #eee; border: 1px solid; border-color: #fff #888 #888 #fff; }
.tabset { display: flex; }
.tab { display: grid; height: 22px; place-items: center; }
.tab svg, .tab span { grid-area: 1 / 1; }
.tab svg { width: 100%; height: 22px; fill: none; stroke: #111; overflow: visible; }
.tab path { vector-effect: non-scaling-stroke; }
.tab path[fill] { stroke: none; }
.t1 { width: 92px; font-weight: bold; font-size: 13px; } .t2 { width: 84px; margin-left: -6px; } .t3 { width: 65px; } .t4 { width: 136px; }
.badge { margin: 1px 98px 0 auto; }
.tabref { font-family: "Liberation Sans", sans-serif; font-size: 14px; gap: 8px; padding: 0 6px 0 0; height: 22px; }

.status { display: flex; height: 21px; background: linear-gradient(90deg, #e0e9f5, #eef3fb 60%); font: 14px/22px "Noto Sans", sans-serif; gap: 4px; }
.ready { flex: 1; padding-left: 2px; }
.status i { border: 1px solid; border-color: #a0b4d0 #fff #fff #a0b4d0; text-align: center; line-height: 20px; }
.p1 { width: 94px; } .p2 { width: 35px; } .p3 { width: 41px; } .p4 { width: 41px; }
```
